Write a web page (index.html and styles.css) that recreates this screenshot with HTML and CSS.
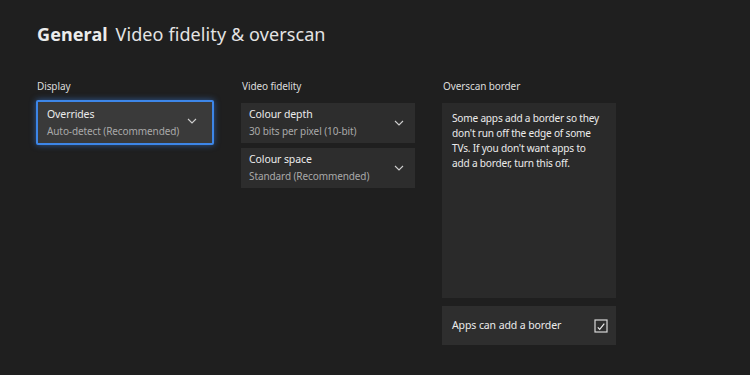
FILE: index.html
```html
<!DOCTYPE html>
<html lang="en">
<head>
  <meta charset="UTF-8" />
  <meta name="viewport" content="width=device-width, initial-scale=1.0" />
  <title>Video fidelity &amp; overscan</title>
  <link rel="stylesheet" href="styles.css">
</head>
<body>
  <header class="page-title">
    <span class="crumb">General</span>
    <span class="page">Video fidelity &amp; overscan</span>
  </header>

  <main class="columns">
    <section class="group group-display">
      <h2 class="group-label">Display</h2>
      <div class="tile tile-focus">
        <div class="tile-text">
          <div class="tile-title">Overrides</div>
          <div class="tile-value">Auto-detect (Recommended)</div>
        </div>
        <svg class="chevron" viewBox="0 0 10 6" width="10" height="6"><path d="M1 1l4 4 4-4" fill="none" stroke="#cfcfcf" stroke-width="1.1"/></svg>
      </div>
    </section>

    <section class="group">
      <h2 class="group-label">Video fidelity</h2>
      <div class="tile">
        <div class="tile-text">
          <div class="tile-title">Colour depth</div>
          <div class="tile-value">30 bits per pixel (10-bit)</div>
        </div>
        <svg class="chevron" viewBox="0 0 10 6" width="10" height="6"><path d="M1 1l4 4 4-4" fill="none" stroke="#cfcfcf" stroke-width="1.1"/></svg>
      </div>
      <div class="tile">
        <div class="tile-text">
          <div class="tile-title">Colour space</div>
          <div class="tile-value">Standard (Recommended)</div>
        </div>
        <svg class="chevron" viewBox="0 0 10 6" width="10" height="6"><path d="M1 1l4 4 4-4" fill="none" stroke="#cfcfcf" stroke-width="1.1"/></svg>
      </div>
    </section>

    <section class="group">
      <h2 class="group-label">Overscan border</h2>
      <div class="info">
        Some apps add a border so they don't run off the edge of some TVs. If you don't want apps to add a border, turn this off.
      </div>
      <div class="tile tile-check">
        <span class="tile-title">Apps can add a border</span>
        <svg class="checkbox" viewBox="0 0 14 14" width="14" height="14"><rect x="1" y="1" width="12" height="12" fill="none" stroke="#d8d8d8" stroke-width="1.2"/><path d="M3.8 8.4l1.9 1.9 4.6-5.6" fill="none" stroke="#ececec" stroke-width="1.2"/></svg>
      </div>
    </section>
  </main>
</body>
</html>
```

FILE: styles.css
```css
html, body {
  margin: 0;
  padding: 0;
  background: #1f1f1f;
  color: #ececec;
  font-family: 'Noto Sans', 'Open Sans', sans-serif;
  width: 750px;
  height: 375px;
  overflow: hidden;
}
.page-title {
  padding: 20px 0 0 37px;
  height: 28px;
  font-size: 18px;
  line-height: 28px;
  letter-spacing: 0.1px;
}
.crumb {
  font-weight: 700;
  margin-right: 3px;
}
.page {
  font-weight: 400;
  color: #e4e4e4;
}
.columns {
  display: grid;
  grid-template-columns: 178px 174px 174px;
  column-gap: 27px;
  padding: 31px 0 0 36px;
  align-items: start;
}
.group {
  display: flex;
  flex-direction: column;
  gap: 5px;
}
.group-label {
  margin: 0 0 4px 1px;
  font-size: 10px;
  font-weight: 400;
  line-height: 15px;
  color: #dcdcdc;
  letter-spacing: -0.1px;
}
.group-display .group-label {
  margin-bottom: 1px;
}
.tile {
  display: flex;
  align-items: center;
  justify-content: space-between;
  height: 40px;
  padding: 0 8px;
  background: #2d2d2d;
  box-sizing: border-box;
}
.tile-title {
  font-size: 10.5px;
  line-height: 17px;
  color: #ececec;
  letter-spacing: -0.1px;
}
.tile-value {
  font-size: 10px;
  line-height: 17px;
  color: #a9a9a9;
  letter-spacing: -0.1px;
}
.chevron {
  margin-right: 3px;
}
.tile-focus {
  height: 45px;
  padding: 0 12px 0 9px;
  background: #3a3a3a;
  border: 2px solid #3d86e8;
  border-radius: 2px;
  box-shadow: 0 0 6px rgba(60, 140, 255, 0.55);
}
.tile-focus .chevron {
  margin-top: -3px;
}
.info {
  height: 195px;
  padding: 8px 12px 8px 10px;
  box-sizing: border-box;
  background: #2a2a2a;
  font-size: 10.1px;
  line-height: 15px;
  letter-spacing: -0.2px;
  color: #ececec;
  margin-bottom: 3px;
}
.tile-check {
  height: 39px;
  padding: 0 8px 0 10px;
  background: #2e2e2e;
}
```
